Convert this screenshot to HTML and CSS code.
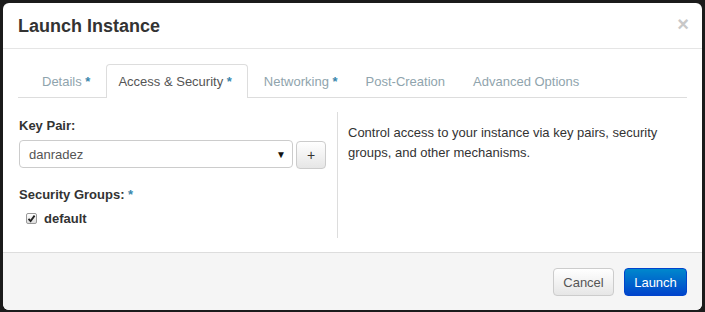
FILE: index.html
```html
<!DOCTYPE html>
<html>
<head>
<meta charset="utf-8">
<link rel="stylesheet" href="styles.css">
</head>
<body>
<div class="modal">
  <div class="modal-header">
    <h3 class="title">Launch Instance</h3>
    <span class="close">×</span>
  </div>
  <div class="modal-body">
    <ul class="tabs">
      <li class="tab">Details <span class="req">*</span></li>
      <li class="tab active">Access &amp; Security <span class="req">*</span></li>
      <li class="tab">Networking <span class="req">*</span></li>
      <li class="tab">Post-Creation</li>
      <li class="tab">Advanced Options</li>
    </ul>
    <div class="tab-content">
      <div class="left">
        <div class="label">Key Pair:</div>
        <div class="select-row">
          <div class="select"><span>danradez</span><span class="caret">▼</span></div>
          <button class="btn plus">+</button>
        </div>
        <div class="label groups">Security Groups: <span class="req">*</span></div>
        <label class="check-row">
          <span class="checkbox">
            <svg width="9" height="9" viewBox="0 0 9 9"><path d="M1.5 4.8 L3.6 7 L7.6 1.6" fill="none" stroke="#222" stroke-width="1.8"/></svg>
          </span>
          <span class="check-label">default</span>
        </label>
      </div>
      <div class="right">
        <p>Control access to your instance via key pairs, security groups, and other mechanisms.</p>
      </div>
    </div>
  </div>
  <div class="modal-footer">
    <button class="btn cancel">Cancel</button>
    <button class="btn launch">Launch</button>
  </div>
</div>
</body>
</html>
```
FILE: styles.css
```css
html, body {
  margin: 0;
  padding: 0;
}
body {
  background: #1b1b1b;
  padding: 3px 3px 2px 3px;
  font-family: "Liberation Sans", Arial, sans-serif;
  font-size: 13px;
  color: #333;
  width: 705px;
  height: 312px;
  box-sizing: border-box;
}
.modal {
  width: 699px;
  height: 307px;
  background: #fff;
  border-radius: 6px;
  display: flex;
  flex-direction: column;
  overflow: hidden;
}
.modal-header {
  height: 45px;
  border-bottom: 1px solid #e5e5e5;
  display: flex;
  align-items: center;
  justify-content: space-between;
  padding: 0 15px;
  flex-shrink: 0;
}
.title {
  margin: 0;
  font-size: 18px;
  font-weight: bold;
  color: #333;
  line-height: 20px;
  padding-top: 1px;
}
.close {
  font-size: 20px;
  font-weight: bold;
  color: #c8c8c8;
  line-height: 20px;
  margin-right: -2px;
  margin-top: -3px;
}
.modal-body {
  flex: 1;
  padding: 15px 15px 0 15px;
}
.tabs {
  list-style: none;
  margin: 0;
  padding: 0 0 0 12px;
  display: flex;
  border-bottom: 1px solid #ddd;
  height: 33px;
}
.tab {
  padding: 0 11px;
  margin-right: 4px;
  height: 33px;
  line-height: 33px;
  color: #8fa4ad;
  border: 1px solid transparent;
  border-bottom: none;
  border-radius: 4px 4px 0 0;
  box-sizing: border-box;
  white-space: nowrap;
}
.tab.active {
  color: #555;
  background: #fff;
  border-color: #ddd;
  height: 34px;
  margin-right: 4px;
  padding: 0 15px 0 11px;
}
.req {
  color: #3a87ad;
  font-weight: bold;
}
.tab-content {
  display: flex;
  padding-top: 14px;
}
.left {
  width: 307px;
  padding: 4px 11px 10px 1px;
  border-right: 1px solid #ddd;
}
.label {
  font-weight: bold;
  line-height: 20px;
  color: #333;
}
.select-row {
  display: flex;
  gap: 3px;
  margin-top: 4px;
}
.select {
  width: 274px;
  height: 28px;
  box-sizing: border-box;
  border: 1px solid #ccc;
  border-radius: 4px;
  display: flex;
  align-items: center;
  justify-content: space-between;
  padding: 0 6px 0 9px;
  color: #555;
  background: #fff;
}
.caret {
  font-size: 10px;
  color: #111;
}
.btn {
  font-family: "Liberation Sans", Arial, sans-serif;
  font-size: 13px;
  border-radius: 4px;
  cursor: pointer;
  box-sizing: border-box;
}
.plus {
  width: 30px;
  height: 28px;
  margin-top: 1px;
  border: 1px solid #ccc;
  background: linear-gradient(#fff, #e6e6e6);
  color: #333;
  font-size: 14px;
  padding: 0;
}
.groups {
  margin-top: 16px;
}
.check-row {
  display: flex;
  align-items: center;
  height: 20px;
  margin-top: 3px;
  padding-left: 7px;
}
.checkbox {
  width: 11px;
  height: 11px;
  border: 1px solid #999;
  border-radius: 2px;
  background: linear-gradient(#fff, #ddd);
  display: flex;
  align-items: center;
  justify-content: center;
  box-sizing: border-box;
  margin-right: 7px;
}
.check-label {
  font-weight: bold;
  color: #333;
}
.right {
  flex: 1;
  padding: 11px 10px 0 10px;
}
.right p {
  margin: 0;
  line-height: 20px;
  color: #333;
  width: 330px;
}
.modal-footer {
  height: 58px;
  flex-shrink: 0;
  border-top: 1px solid #ddd;
  background: #f5f5f5;
  display: flex;
  justify-content: flex-end;
  align-items: flex-start;
  padding: 15px 15px 0 0;
  box-sizing: border-box;
  gap: 10px;
}
.cancel {
  width: 61px;
  height: 28px;
  border: 1px solid #ccc;
  background: linear-gradient(#fff, #e6e6e6);
  color: #555;
}
.launch {
  width: 63px;
  height: 28px;
  border: 1px solid #04c;
  background: linear-gradient(#08c, #04c);
  color: #fff;
}
```
